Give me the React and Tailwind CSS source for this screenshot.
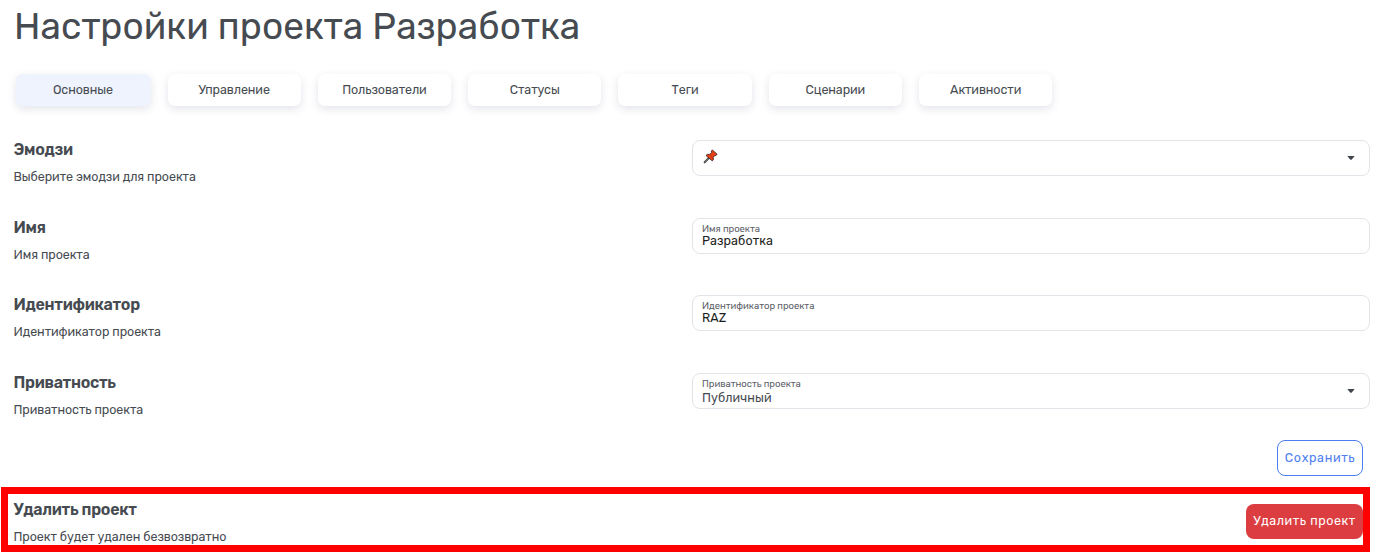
const tabs = ['Основные', 'Управление', 'Пользователи', 'Статусы', 'Теги', 'Сценарии', 'Активности'];

function Caret() {
  return (
    <svg className="mr-[14px] h-[4px] w-[8px] shrink-0" viewBox="0 0 8 4">
      <path d="M0.3 0h7.4L4.8 3.4Q4 4.1 3.2 3.4Z" fill="#41464c" />
    </svg>
  );
}

function Pushpin() {
  return (
    <svg className="mb-[3px] ml-[1px] h-[15px] w-[15px]" viewBox="0 0 16 16">
      <path d="M1.8 14.2L6 9.8" stroke="#4a4a4a" strokeWidth="2.2" strokeLinecap="round" />
      <path d="M2.2 13.8L5.6 10.2" stroke="#8b8b8b" strokeWidth="0.7" />
      <path
        d="M10 1L15 5.6L13.6 7.1L12.5 6.9L10.9 9L11 11.6L9.8 12.6L3.2 7L4.6 5.7L7.2 5.8L9.2 3.7L8.9 2.2Z"
        fill="#ea4016"
        stroke="#3a211b"
        strokeWidth="0.9"
        strokeLinejoin="round"
      />
      <path d="M7.3 6.2L10.6 9" stroke="#a8300f" strokeWidth="0.6" />
    </svg>
  );
}

function Caption({ title, text }) {
  return (
    <div className="text-[#464b51]">
      <h2 className="text-[16px] leading-[20px] font-semibold tracking-[-0.3px]">{title}</h2>
      <p className="mt-[8.4px] text-[12.5px] leading-[18px] tracking-[-0.06px]">{text}</p>
    </div>
  );
}

function Row({ title, text, children }) {
  return (
    <div className="flex h-[77.5px] items-start justify-between pl-[13.5px] pr-[4px]">
      <Caption title={title} text={text} />
      <div className="mt-[0.4px] flex h-[36px] w-[678px] items-center justify-between rounded-[8px] border border-[#e1e4e9] pl-[9px]">
        {children}
      </div>
    </div>
  );
}

function Value({ label, value, dark }) {
  return (
    <div className="pb-[1px]">
      <div className="text-[9.5px] leading-[11px] tracking-[-0.03px] text-[#5c6168]">{label}</div>
      <div className={dark ? 'text-[12.5px] leading-[14px] tracking-[0.08px] text-[#1c1e21]' : '-mb-[2px] pt-[2px] text-[12.5px] leading-[14px] tracking-[0.08px] text-[#464b51]'}>
        {value}
      </div>
    </div>
  );
}

export default function App() {
  return (
    <main className="h-[555px] w-[1374px] overflow-hidden bg-white font-['Rubik','Roboto',sans-serif]">
      <h1 className="h-[74px] pl-[14px] pt-[3px] text-[37px] leading-[46px] tracking-[0.04px] text-[#464b51]">
        Настройки проекта Разработка
      </h1>
      <nav className="flex h-[66px] gap-[17px] pl-[15.5px]">
        {tabs.map((tab, i) => (
          <button
            key={tab}
            className={
              i === 0
                ? 'h-[32px] w-[135px] rounded-[7px] bg-[#eff3fe] text-[12.5px] tracking-[-0.07px] text-[#464b51] shadow-[0_3px_9px_rgba(70,75,120,0.15)]'
                : 'h-[32px] w-[133.3px] rounded-[7px] bg-white text-[12.5px] tracking-[-0.07px] text-[#464b51] shadow-[0_3px_9px_rgba(70,75,120,0.15)]'
            }
          >
            {tab}
          </button>
        ))}
      </nav>
      <section className="h-[300px]">
        <Row title="Эмодзи" text="Выберите эмодзи для проекта">
          <Pushpin />
          <Caret />
        </Row>
        <Row title="Имя" text="Имя проекта">
          <Value label="Имя проекта" value="Разработка" dark />
        </Row>
        <Row title="Идентификатор" text="Идентификатор проекта">
          <Value label="Идентификатор проекта" value="RAZ" dark />
        </Row>
        <Row title="Приватность" text="Приватность проекта">
          <Value label="Приватность проекта" value="Публичный" />
          <Caret />
        </Row>
      </section>
      <div className="flex h-[47px] justify-end pr-[11px]">
        <button className="h-[36px] w-[86px] rounded-[8px] border border-[#4d7df0] text-[12.5px] tracking-[0.65px] text-[#4d7df0]">
          Сохранить
        </button>
      </div>
      <section className="ml-[1px] flex h-[65px] w-[1369px] justify-between border-[7px] border-[#ff0000] pl-[5.5px] pt-[5px]">
        <div className="pt-[1px]">
          <Caption title="Удалить проект" text="Проект будет удален безвозвратно" />
        </div>
        <button className="mt-[5px] h-[35px] w-[117px] rounded-[8px] bg-[#dc3d40] text-[12.5px] tracking-[0.58px] text-white">
          Удалить проект
        </button>
      </section>
    </main>
  );
}
